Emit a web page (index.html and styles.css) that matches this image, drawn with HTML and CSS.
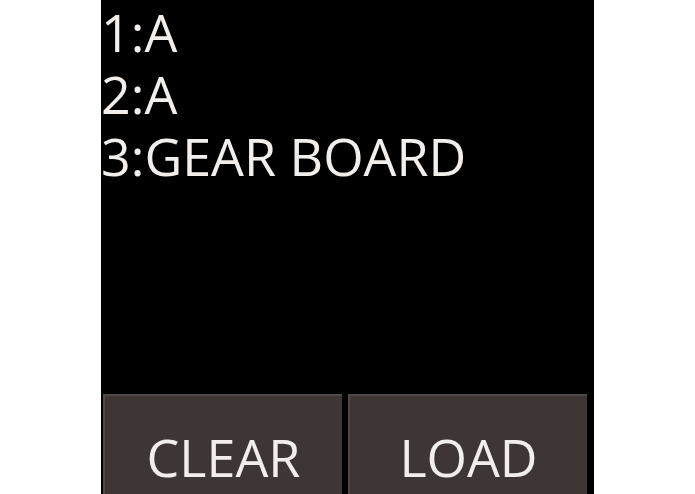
FILE: index.html
```html
<!DOCTYPE html>
<html lang="en">
<head>
  <meta charset="UTF-8" />
  <meta name="viewport" content="width=device-width, initial-scale=1.0" />
  <title>Board Slots</title>
  <link rel="stylesheet" href="styles.css">
</head>
<body>
  <div class="screen">
    <!-- Saved slots -->
    <ul class="slots">
      <li>1:A</li>
      <li>2:A</li>
      <li>3:GEAR BOARD</li>
    </ul>

    <!-- Actions -->
    <div class="actions">
      <button class="action">CLEAR</button>
      <button class="action">LOAD</button>
    </div>
  </div>
</body>
</html>
```

FILE: styles.css
```css
/* Base styling */
html, body {
  margin: 0;
  height: 100%;
  background: #fff;
  overflow: hidden;
}
.screen {
  width: 493px;
  height: 494px;
  margin-left: 101px;
  background: #000;
  display: flex;
  flex-direction: column;
  font-family: "Open Sans", sans-serif;
  color: #f1eeeb;
}
.slots {
  list-style: none;
  margin: 0;
  padding: 1px 0 0 0;
  flex: 1;
  font-size: 52px;
  line-height: 62px;
}
.actions {
  display: grid;
  grid-template-columns: 1fr 1fr;
  gap: 6px;
  padding: 0 7px 0 2px;
  height: 100px;
}
.action {
  background: #3e3634;
  border: none;
  border-top: 2px solid #4f4846;
  border-left: 2px solid #4f4846;
  color: #f1eeeb;
  font-family: "Open Sans", sans-serif;
  font-size: 52px;
  line-height: 62px;
  padding: 30px 0 0 0;
  display: flex;
  justify-content: center;
  align-items: flex-start;
  cursor: pointer;
}
```
